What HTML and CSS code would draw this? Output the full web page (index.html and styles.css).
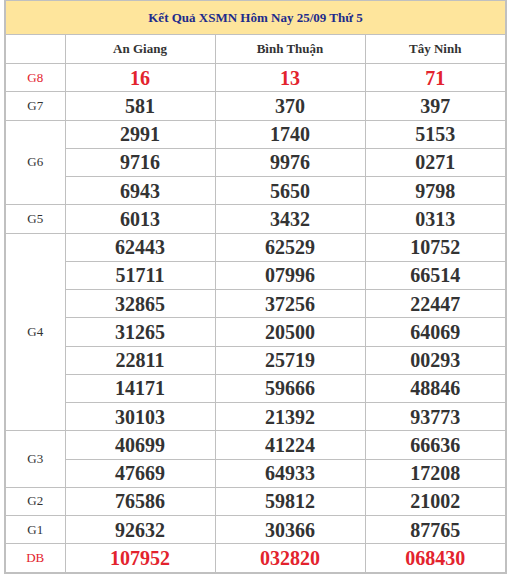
FILE: index.html
```html
<!DOCTYPE html>
<html lang="vi">
<head>
<meta charset="utf-8">
<title>Kết Quả XSMN</title>
<link rel="stylesheet" href="styles.css">
</head>
<body>
<table class="kq">
  <colgroup>
    <col class="c-lbl"><col class="c-num"><col class="c-num"><col class="c-last">
  </colgroup>
  <thead>
    <tr class="title-row"><th colspan="4">Kết Quả XSMN Hôm Nay 25/09 Thứ 5</th></tr>
    <tr class="prov-row"><th></th><th>An Giang</th><th>Bình Thuận</th><th>Tây Ninh</th></tr>
  </thead>
  <tbody>
    <tr class="red"><td class="lbl">G8</td><td>16</td><td>13</td><td>71</td></tr>
    <tr><td class="lbl">G7</td><td>581</td><td>370</td><td>397</td></tr>
    <tr><td class="lbl" rowspan="3">G6</td><td>2991</td><td>1740</td><td>5153</td></tr>
    <tr><td>9716</td><td>9976</td><td>0271</td></tr>
    <tr><td>6943</td><td>5650</td><td>9798</td></tr>
    <tr><td class="lbl">G5</td><td>6013</td><td>3432</td><td>0313</td></tr>
    <tr><td class="lbl" rowspan="7">G4</td><td>62443</td><td>62529</td><td>10752</td></tr>
    <tr><td>51711</td><td>07996</td><td>66514</td></tr>
    <tr><td>32865</td><td>37256</td><td>22447</td></tr>
    <tr><td>31265</td><td>20500</td><td>64069</td></tr>
    <tr><td>22811</td><td>25719</td><td>00293</td></tr>
    <tr><td>14171</td><td>59666</td><td>48846</td></tr>
    <tr><td>30103</td><td>21392</td><td>93773</td></tr>
    <tr><td class="lbl" rowspan="2">G3</td><td>40699</td><td>41224</td><td>66636</td></tr>
    <tr><td>47669</td><td>64933</td><td>17208</td></tr>
    <tr><td class="lbl">G2</td><td>76586</td><td>59812</td><td>21002</td></tr>
    <tr><td class="lbl">G1</td><td>92632</td><td>30366</td><td>87765</td></tr>
    <tr class="red"><td class="lbl">DB</td><td>107952</td><td>032820</td><td>068430</td></tr>
  </tbody>
</table>
</body>
</html>
```

FILE: styles.css
```css
html, body {
  margin: 0;
  padding: 0;
  background: #ffffff;
}

.kq {
  margin: 0 0 0 4px;
  width: 503px;
  table-layout: fixed;
  border-collapse: collapse;
  border: 2px solid #c0c0c0;
  border-top: 1px solid #c0c0c0;
  font-family: "Liberation Serif", "Times New Roman", serif;
  color: #333333;
}

.c-lbl { width: 60px; }
.c-num { width: 150px; }
.c-last { width: auto; }

.kq th,
.kq td {
  border: 1px solid #c0c0c0;
  padding: 0;
  text-align: center;
  vertical-align: middle;
}

.title-row th {
  height: 33px;
  background: #fee59c;
  color: #1d2b8c;
  font-size: 13px;
  font-weight: bold;
}

.prov-row th {
  height: 28px;
  font-size: 13px;
  font-weight: bold;
  color: #333333;
}

.kq td {
  height: 27.25px;
  font-size: 20px;
  font-weight: bold;
  line-height: 20px;
}

.kq td.lbl {
  font-size: 13px;
  font-weight: normal;
  color: #333333;
}

.red td,
.red td.lbl {
  color: #e3232d;
}
```
